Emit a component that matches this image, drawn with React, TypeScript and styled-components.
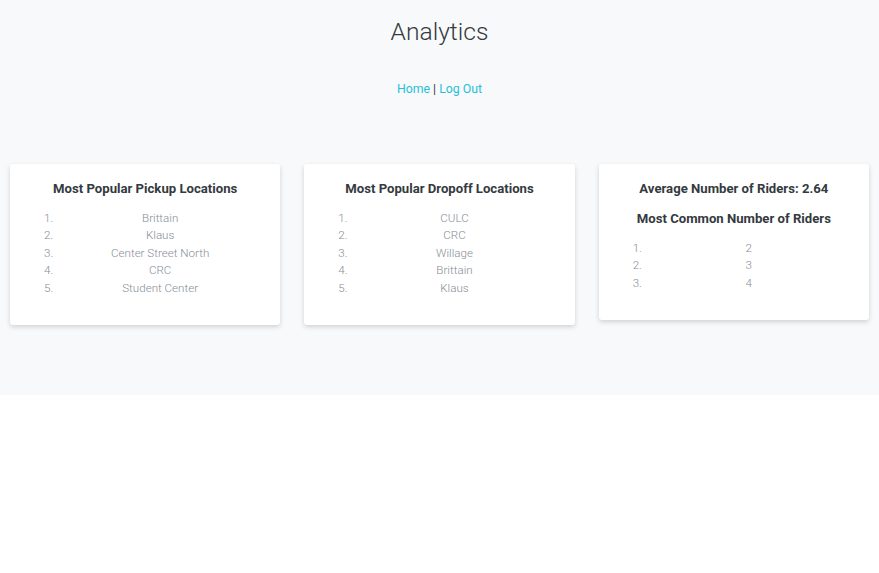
import React from "react";
import styled, { createGlobalStyle } from "styled-components";

const Global = createGlobalStyle`
  html, body { margin: 0; padding: 0; background: #ffffff; }
  body { font-family: Roboto, "Liberation Sans", sans-serif; color: #212529; }
`;

const Section = styled.section`
  background: #f8f9fa;
  padding: 17px 10px 70px;
  display: flex;
  flex-direction: column;
  align-items: center;
`;

const Title = styled.h1`
  margin: 0;
  font-size: 24.6px;
  font-weight: 300;
  line-height: 29.4px;
  color: #343a40;
`;

const Nav = styled.nav`
  margin-top: 34px;
  font-size: 12.3px;
  line-height: 18.4px;
  color: #343a40;
`;

const NavLink = styled.a`
  color: #26c0d9;
  text-decoration: none;
`;

const Cards = styled.div`
  margin-top: 65px;
  align-self: stretch;
  display: grid;
  grid-template-columns: repeat(3, 1fr);
  gap: 24px;
  align-items: start;
`;

const Card = styled.div`
  background: #ffffff;
  border-radius: 3px;
  box-shadow: 0 2px 5px rgba(0, 0, 0, 0.16);
  padding: 16px 16px;
  text-align: center;
`;

const CardTitle = styled.h5`
  margin: 0 0 12px;
  font-size: 13.15px;
  font-weight: 700;
  line-height: 18px;
  color: #343a40;
`;

const List = styled.ol`
  margin: 0 0 11.5px;
  padding-left: 30px;
  text-align: center;
`;

const Item = styled.li`
  font-size: 11.6px;
  font-weight: 300;
  line-height: 17.5px;
  color: #868e96;
`;

const pickups = ["Brittain", "Klaus", "Center Street North", "CRC", "Student Center"];
const dropoffs = ["CULC", "CRC", "Willage", "Brittain", "Klaus"];
const riders = ["2", "3", "4"];

export default function App() {
  return (
    <>
      <Global />
      <Section>
        <Title>Analytics</Title>
        <Nav>
          <NavLink href="#">Home</NavLink> | <NavLink href="#">Log Out</NavLink>
        </Nav>
        <Cards>
          <Card>
            <CardTitle>Most Popular Pickup Locations</CardTitle>
            <List>
              {pickups.map((p) => (
                <Item key={p}>{p}</Item>
              ))}
            </List>
          </Card>
          <Card>
            <CardTitle>Most Popular Dropoff Locations</CardTitle>
            <List>
              {dropoffs.map((p) => (
                <Item key={p}>{p}</Item>
              ))}
            </List>
          </Card>
          <Card>
            <CardTitle>Average Number of Riders: 2.64</CardTitle>
            <CardTitle>Most Common Number of Riders</CardTitle>
            <List>
              {riders.map((p) => (
                <Item key={p}>{p}</Item>
              ))}
            </List>
          </Card>
        </Cards>
      </Section>
    </>
  );
}
